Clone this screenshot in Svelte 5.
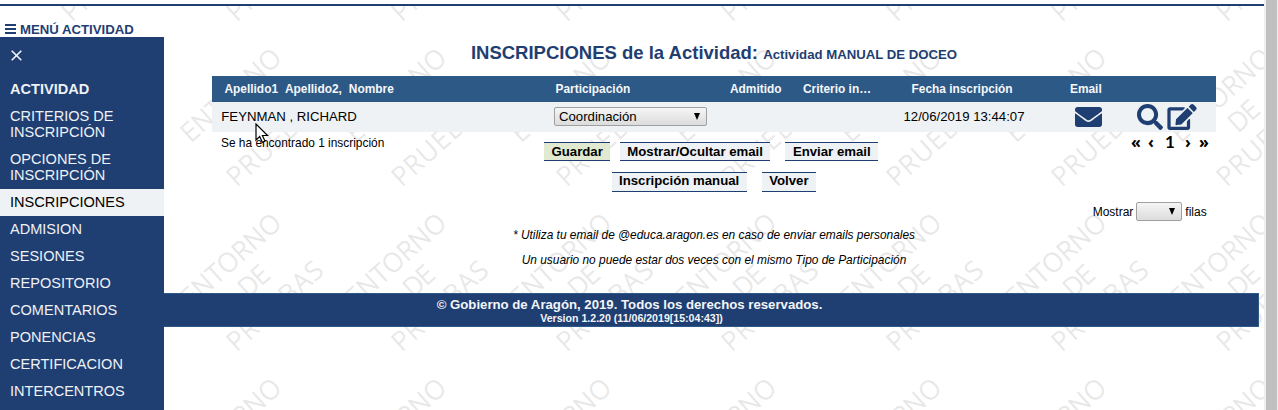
<script>
  const menu = ['CRITERIOS DE INSCRIPCIÓN', 'OPCIONES DE INSCRIPCIÓN', 'INSCRIPCIONES', 'ADMISION', 'SESIONES', 'REPOSITORIO', 'COMENTARIOS', 'PONENCIAS', 'CERTIFICACION', 'INTERCENTROS'];
  const active = 'INSCRIPCIONES';
  const words = [
    { text: 'ENTORNO', x: -1, y: -21.5, length: 124 },
    { text: 'DE', x: 2, y: 9.5, length: 32 },
    { text: 'PRUEBAS', x: 1, y: 42, length: 119 }
  ];
  // The top row shows only its last line and the bottom row only its first.
  const rows = [{ y: -48, words: words.slice(2) }, { y: 117, words }, { y: 282, words }, { y: 447, words: words.slice(0, 1) }];
  const marks = [{ x: 87, ...rows[0] }];
  for (const row of rows) for (let c = 0; c < 7; c++) marks.push({ x: 252 + c * 165, ...row });
</script>

<div class="page">
  <svg class="watermark" width="1264" height="404" viewBox="0 6 1264 404" aria-hidden="true">
    {#each marks as m}
      <g transform="translate({m.x} {m.y}) rotate(-42)">
        {#each m.words as w}
          <text x={w.x} y={w.y} textLength={w.length}>{w.text}</text>
        {/each}
      </g>
    {/each}
  </svg>
  <div class="rule"></div>
  <aside>
    <div class="toggle">
      <svg width="11" height="10" viewBox="0 0 11 10"><path d="M0 1h11M0 5h11M0 9h11" stroke="#1f3e72" stroke-width="2" /></svg>
      <span>MENÚ ACTIVIDAD</span>
    </div>
    <nav>
      <svg class="close" width="11" height="11" viewBox="0 0 11 11"><path d="M.7.7l9.6 9.6M10.300.7L.7 10.300" stroke="#f3f6f9" stroke-width="1.6" /></svg>
      <div class="item head">ACTIVIDAD</div>
      {#each menu as m}
        <div class="item" class:active={m === active}>{m}</div>
      {/each}
    </nav>
  </aside>
  <main>
    <h1><span>INSCRIPCIONES de la Actividad:</span> <small>Actividad MANUAL DE DOCEO</small></h1>
    <section class="table">
      <div class="row th">
        <div class="names"><span>Apellido1</span><span>Apellido2,</span><span>Nombre</span></div>
        <div>Participación</div>
        <div>Admitido</div>
        <div>Criterio in…</div>
        <div>Fecha inscripción</div>
        <div>Email</div>
      </div>
      <div class="row td">
        <div class="person">FEYNMAN , RICHARD</div>
        <div class="pick"><span class="select wide">Coordinación<svg width="6" height="7" viewBox="0 0 6 7"><path d="M0 0h6L3 7z" /></svg></span></div>
        <div></div>
        <div></div>
        <div class="date">12/06/2019 13:44:07</div>
        <div class="mail">
          <svg width="27" height="20" viewBox="0 64 512 384" preserveAspectRatio="none"><path fill="#1f3e72" d="M502.300 190.800c3.900-3.100 9.700-.2 9.700 4.700V400c0 26.500-21.500 48-48 48H48c-26.500 0-48-21.500-48-48V195.600c0-5 5.700-7.800 9.700-4.700 22.400 17.400 52.100 39.500 154.100 113.600 21.100 15.400 56.700 47.800 92.200 47.600 35.700.3 72-32.800 92.300-47.600 102-74.100 131.600-96.300 154-113.700zM256 320c23.200.4 56.600-29.200 73.400-41.400 132.700-96.300 142.800-104.700 173.400-128.700 5.800-4.500 9.200-11.500 9.200-18.900v-19c0-26.500-21.500-48-48-48H48c-26.500 0-48 21.500-48 48v19c0 7.400 3.400 14.300 9.200 18.900 30.600 23.900 40.700 32.400 173.400 128.700 16.800 12.200 50.200 41.800 73.400 41.400z" /></svg>
        </div>
        <div class="tools">
          <svg width="26" height="26" viewBox="0 0 512 512"><path fill="#1f3e72" d="M505 442.700L405.300 343c-4.500-4.500-10.600-7-17-7H372c27.600-35.300 44-79.700 44-128C416 93.100 322.900 0 208 0S0 93.100 0 208s93.100 208 208 208c48.300 0 92.700-16.400 128-44v16.300c0 6.400 2.500 12.500 7 17l99.700 99.700c9.400 9.400 24.600 9.400 33.900 0l28.300-28.300c9.400-9.400 9.400-24.600.1-34zM208 336c-70.700 0-128-57.200-128-128 0-70.700 57.200-128 128-128 70.700 0 128 57.200 128 128 0 70.700-57.200 128-128 128z" /></svg>
          <svg width="30" height="26" viewBox="0 0 576 512"><path fill="#1f3e72" d="M402.600 83.200l90.200 90.200c3.800 3.800 3.800 10 0 13.800L274.400 405.600l-92.800 10.300c-12.400 1.400-22.900-9.100-21.500-21.500l10.300-92.800L388.800 83.200c3.800-3.800 10-3.800 13.800 0zm162-22.900l-48.800-48.800c-15.200-15.200-39.900-15.200-55.200 0l-35.400 35.400c-3.800 3.800-3.800 10 0 13.800l90.200 90.200c3.800 3.800 10 3.800 13.800 0l35.400-35.400c15.200-15.300 15.200-40 0-55.200zM384 346.200V448H64V128h229.800c3.200 0 6.200-1.300 8.500-3.500l40-40c7.600-7.600 2.200-20.500-8.500-20.500H48C21.500 64 0 85.500 0 112v352c0 26.500 21.500 48 48 48h352c26.500 0 48-21.500 48-48V306.200c0-10.700-12.900-16-20.500-8.500l-40 40c-2.200 2.300-3.500 5.300-3.500 8.500z" /></svg>
        </div>
      </div>
    </section>
    <div class="summary">
      <span class="found">Se ha encontrado 1 inscripción</span>
      <div class="actions"><button class="save">Guardar</button><button>Mostrar/Ocultar email</button><button>Enviar email</button></div>
      <div class="pager"><span>«</span><span>‹</span><span class="num">1</span><span>›</span><span>»</span></div>
    </div>
    <div class="second"><button>Inscripción manual</button><button>Volver</button></div>
    <div class="count"><span>Mostrar</span><span class="select narrow"><svg width="6" height="7" viewBox="0 0 6 7"><path d="M0 0h6L3 7z" /></svg></span><span>filas</span></div>
    <p class="n1"><span>* Utiliza tu email de @educa.aragon.es en caso de enviar emails personales</span></p>
    <p class="n2"><span>Un usuario no puede estar dos veces con el mismo Tipo de Participación</span></p>
    <footer>
      <div class="copy">© Gobierno de Aragón, 2019. Todos los derechos reservados.</div>
      <div class="ver">Version 1.2.20 (11/06/2019[15:04:43])</div>
    </footer>
  </main>
  <div class="scroll"></div>
  <svg class="cursor" width="14" height="21" viewBox="0 0 14 21"><path d="M1 1v16l3.700-3.500 2.600 5.800 2.700-1.200-2.600-5.600h5.200z" fill="#fff" stroke="#000" stroke-width="1.200" /></svg>
</div>

<style>
  :global(body) { margin: 0; background: #fff; overflow: hidden; }
  .page { position: relative; width: 1278px; height: 410px; overflow: hidden; display: grid; grid-template: 6px 404px / 164px 1100px 14px; font-family: 'Liberation Sans', Arial, sans-serif; color: #000; }
  .watermark { position: absolute; left: 0; top: 6px; }
  .watermark text { font: 300 26px 'Open Sans', sans-serif; fill: #e7e7e7; stroke: #e7e7e7; stroke-width: .5px; text-anchor: middle; }
  .rule { grid-column: 1 / 3; margin-top: 4px; height: 2px; background: #1f3e72; z-index: 1; }
  aside, main { position: relative; z-index: 1; grid-row: 2; }
  .toggle { height: 31px; box-sizing: border-box; padding: 16px 0 0 5px; display: flex; align-items: flex-start; gap: 4px; font: bold 13.2px/15px 'Liberation Sans', Arial, sans-serif; color: #1f3e72; white-space: nowrap; }
  .toggle svg { margin-top: 2px; }
  nav { height: 373px; background: #1f3e72; }
  .close { display: block; padding: 13px 0 0 11px; height: 11px; margin-bottom: 15px; }
  .item { padding: 5px 10px 6px; font-size: 14.55px; line-height: 16px; color: #eef1f5; }
  .item.head { font-weight: bold; }
  .item.active { background: #eef2f5; color: #000; }
  main { grid-column: 2; }
  h1 { margin: 0; height: 70px; box-sizing: border-box; padding: 35px 0 0; text-align: center; font-size: 18.5px; line-height: 24px; color: #1f3e72; white-space: nowrap; }
  h1 small { font-size: 13.2px; }
  .table { width: 1004px; margin-left: 48px; }
  .row { display: grid; grid-template-columns: 343.500px 174.500px 73px 108.500px 158.500px 66px 80px; white-space: nowrap; }
  .th { height: 26px; background: #2d5986; color: #f5f7fa; font: bold 11.9px/26px 'Liberation Sans', Arial, sans-serif; }
  .names { display: flex; gap: 7px; padding-left: 12.500px; }
  .td { height: 30px; background: #eef2f5; font-size: 13.2px; line-height: 30px; }
  .person { padding-left: 9.300px; }
  .pick { padding-top: 5px; margin-left: -1.500px; line-height: 18px; }
  .date { margin-left: -8px; }
  .mail, .tools { display: flex; }
  .mail { padding: 5px 0 0 5px; }
  .tools { padding: 2px 0 0 1px; gap: 4px; }
  .select { display: flex; justify-content: space-between; align-items: center; box-sizing: border-box; height: 19px; border: 1px solid #a0a0a0; border-radius: 2px; background: linear-gradient(#f5f5f5, #dcdcdc); padding: 0 6px 0 4px; }
  .select svg { margin-bottom: 1px; }
  .wide { width: 153px; }
  .narrow { width: 46px; justify-content: flex-end; }
  .summary { height: 40px; display: grid; grid-template-columns: 323px 587px 84px; padding-left: 57px; font-size: 11.9px; white-space: nowrap; }
  .found { padding-top: 4px; line-height: 14px; }
  .actions { display: flex; padding-top: 10px; }
  button { font: bold 13.2px/15px 'Liberation Sans', Arial, sans-serif; height: 19px; box-sizing: border-box; border: 0; border-top: 1px solid #1f3e72; border-bottom: 1px solid #1f3e72; padding: 0 7.500px; background: #eef2f5; color: #000; white-space: nowrap; }
  .save { background: #e1e9d0; }
  .actions button + button { margin-left: 9.500px; }
  .actions button:last-child { margin-left: 15px; }
  .pager { display: grid; grid-template-columns: 17px 17px 20px 14px 12px; font: bold 16px/21px 'Noto Sans', sans-serif; }
  .num { font: 700 17px/19px Lato, sans-serif; }
  .second { display: flex; gap: 15px; padding-left: 447.500px; height: 30px; }
  .second button { height: 20px; line-height: 14px; padding-bottom: 2px; }
  .count { display: flex; gap: 3px; padding-left: 928.700px; font-size: 12px; line-height: 20px; height: 19px; }
  p { margin: 0; text-align: center; font-size: 11.9px; line-height: 14px; font-style: italic; height: 25px; }
  .n1 { padding-top: 7px; }
  footer { width: 1095px; height: 34px; box-sizing: border-box; border: 1px solid #2d5986; border-left: 0; background: #1f3e72; color: #f2f5f8; font-weight: bold; text-align: center; white-space: nowrap; margin-top: 15px; }
  .copy { font-size: 13.2px; line-height: 15px; padding: 3px 163px 0 0; }
  .ver { font-size: 10.600px; line-height: 13px; padding-right: 159px; }
  .scroll { grid-area: 1 / 3 / 3 / 4; background: #c0c0c0; border-left: 2px solid #efefef; border-right: 1px solid #efefef; }
  .cursor { position: absolute; left: 255px; top: 123px; z-index: 3; }
</style>
